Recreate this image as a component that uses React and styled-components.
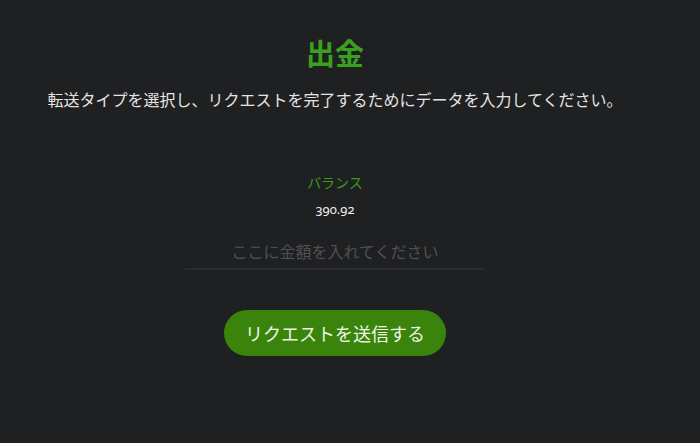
import styled, { createGlobalStyle } from "styled-components";

const Global = createGlobalStyle`
  html, body {
    margin: 0;
    padding: 0;
    background: #1f2022;
    height: 100%;
  }
  body {
    font-family: "Noto Sans CJK JP", "Noto Sans", sans-serif;
  }
`;

const Page = styled.div`
  width: 670px;
  height: 443px;
  display: flex;
  flex-direction: column;
  align-items: center;
  padding-top: 32px;
  box-sizing: border-box;
`;

const Title = styled.h1`
  margin: 0;
  font-size: 29px;
  line-height: 40px;
  font-weight: 700;
  color: #3aa01e;
`;

const Lead = styled.p`
  margin: 15px 0 0;
  font-size: 16px;
  line-height: 24px;
  color: #e4e4e4;
`;

const Form = styled.div`
  margin-top: 61px;
  display: flex;
  flex-direction: column;
  align-items: center;
`;

const Label = styled.div`
  font-size: 14px;
  line-height: 20px;
  color: #3a9a1a;
`;

const Amount = styled.div`
  margin-top: 8px;
  font-family: "Noto Sans", sans-serif;
  font-variant-numeric: oldstyle-nums;
  font-size: 13px;
  line-height: 18px;
  color: #f0f0f0;
`;

const Input = styled.input`
  margin-top: 16px;
  width: 300px;
  height: 34px;
  padding: 0;
  border: none;
  border-bottom: 2px solid #2a2b2d;
  background: transparent;
  text-align: center;
  font-family: inherit;
  font-size: 16px;
  color: #ddd;
  outline: none;
  &::placeholder {
    color: #4f5052;
  }
`;

const Submit = styled.button`
  margin-top: 40px;
  width: 222px;
  height: 46px;
  border: none;
  border-radius: 23px;
  background: #3a840b;
  color: #eef4e6;
  font-family: inherit;
  font-size: 18px;
  cursor: pointer;
`;

export default function App() {
  return (
    <>
      <Global />
      <Page>
        <Title>出金</Title>
        <Lead>転送タイプを選択し、リクエストを完了するためにデータを入力してください。</Lead>
        <Form>
          <Label>バランス</Label>
          <Amount>390.92</Amount>
          <Input placeholder="ここに金額を入れてください" />
          <Submit>リクエストを送信する</Submit>
        </Form>
      </Page>
    </>
  );
}
